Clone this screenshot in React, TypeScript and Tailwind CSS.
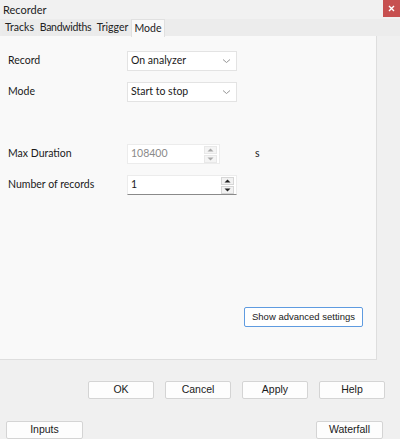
import React from "react";

const ui = { fontFamily: 'Lato, "Open Sans", sans-serif' };
const btn = { fontFamily: '"Liberation Sans", Arial, sans-serif' };

function Chevron() {
  return (
    <svg width="9" height="6" viewBox="0 0 9 6" className="shrink-0">
      <path d="M1 1.5 L4.5 4.5 L8 1.5" fill="none" stroke="#8a8a8a" strokeWidth="0.9" />
    </svg>
  );
}

function Select({ value }: { value: string }) {
  return (
    <div className="w-[110px] h-[20px] bg-white border border-[#e3e3e3] flex items-center justify-between pl-[3px] pr-[5px] text-[10.5px] text-[#1a1a1a]" style={ui}>
      <span>{value}</span>
      <Chevron />
    </div>
  );
}

function Arrow({ up, color }: { up: boolean; color: string }) {
  return (
    <svg width="7" height="4" viewBox="0 0 7 4">
      {up ? <path d="M0.5 3.5 L3.5 0.5 L6.5 3.5 Z" fill={color} /> : <path d="M0.5 0.5 L3.5 3.5 L6.5 0.5 Z" fill={color} />}
    </svg>
  );
}

function Spin({ value, disabled, width }: { value: string; disabled?: boolean; width: string }) {
  const c = disabled ? "#a8a8a8" : "#222";
  return (
    <div
      className={`${width} h-[20px] bg-white flex items-center justify-between pl-[3px] pr-[2px] text-[10.5px] border ${
        disabled ? "border-[#ececec] text-[#8a8a8a]" : "border-[#ececec] border-b-[#8a8a8a] text-[#1a1a1a]"
      }`}
      style={ui}
    >
      <span>{value}</span>
      <div className="flex flex-col gap-[1px]">
        <div className={`w-[13px] h-[8px] flex items-center justify-center border ${disabled ? "border-[#e8e8e8] bg-[#f4f4f4]" : "border-[#d6d6d6] bg-[#f2f2f2]"}`}>
          <Arrow up color={c} />
        </div>
        <div className={`w-[13px] h-[8px] flex items-center justify-center border ${disabled ? "border-[#e8e8e8] bg-[#f4f4f4]" : "border-[#d6d6d6] bg-[#f2f2f2]"}`}>
          <Arrow up={false} color={c} />
        </div>
      </div>
    </div>
  );
}

function Button({ label, w }: { label: string; w: string }) {
  return (
    <div className={`${w} h-[18px] bg-[#fdfdfd] border border-[#d4d4d4] rounded-[2px] flex items-center justify-center text-[10.5px] text-[#1a1a1a]`} style={btn}>
      {label}
    </div>
  );
}

export default function App() {
  return (
    <div className="w-[400px] h-[439px] bg-[#f0f0f0] flex flex-col overflow-hidden">
      {/* title bar */}
      <div className="h-[19px] flex justify-between items-start bg-[#f1f1f1]">
        <span className="pl-[3px] pt-[2px] text-[11px] text-[#222]" style={ui}>Recorder</span>
        <div className="w-[17px] h-[17px] bg-[#c75050] flex items-center justify-center">
          <svg width="7" height="7" viewBox="0 0 7 7">
            <path d="M1 1 L6 6 M6 1 L1 6" stroke="#fff" strokeWidth="1.4" />
          </svg>
        </div>
      </div>
      {/* tabs */}
      <div className="h-[17px] flex items-end pl-[2px] bg-[#ececec] text-[10.5px] text-[#222] whitespace-nowrap" style={ui}>
        <div className="h-[16px] w-[35px] shrink-0 flex items-center justify-center bg-[#ebebeb]">Tracks</div>
        <div className="h-[16px] w-[55px] shrink-0 ml-[1px] flex items-center justify-center bg-[#ebebeb] tracking-[-0.3px]">Bandwidths</div>
        <div className="h-[16px] w-[37px] shrink-0 ml-[1px] flex items-center justify-center bg-[#ebebeb]">Trigger</div>
        <div className="h-[18px] w-[34px] shrink-0 flex items-center justify-center bg-[#f9f9f9] border-t border-x border-[#e0e0e0] relative top-[1px]">Mode</div>
      </div>
      {/* panel */}
      <div className="w-[377px] h-[324px] bg-[#f9f9f9] border-r border-b border-[#dedede] flex flex-col pt-[15px] text-[10.5px] text-[#1a1a1a]" style={ui}>
        <div className="flex items-center">
          <div className="w-[127px] pl-[8px]">Record</div>
          <Select value="On analyzer" />
        </div>
        <div className="flex items-center mt-[11px]">
          <div className="w-[127px] pl-[8px]">Mode</div>
          <Select value="Start to stop" />
        </div>
        <div className="flex items-center mt-[42px]">
          <div className="w-[127px] pl-[8px]">Max Duration</div>
          <Spin value="108400" disabled width="w-[93px]" />
          <span className="ml-[35px]">s</span>
        </div>
        <div className="flex items-center mt-[11px]">
          <div className="w-[127px] pl-[8px]">Number of records</div>
          <Spin value="1" width="w-[110px]" />
        </div>
        <div className="flex-1" />
        <div className="flex justify-end pr-[13px] mb-[32px]">
          <div className="w-[119px] h-[20px] bg-white border border-[#5f9be0] rounded-[2px] flex items-center justify-center text-[9.5px] text-[#1a1a1a]" style={btn}>
            Show advanced settings
          </div>
        </div>
      </div>
      {/* bottom */}
      <div className="flex pl-[88px] gap-[11px] mt-[21px]">
        <Button label="OK" w="w-[66px]" />
        <Button label="Cancel" w="w-[66px]" />
        <Button label="Apply" w="w-[66px]" />
        <Button label="Help" w="w-[66px]" />
      </div>
      <div className="flex justify-between pl-[6px] pr-[17px] mt-[22px]">
        <Button label="Inputs" w="w-[77px]" />
        <Button label="Waterfall" w="w-[67px]" />
      </div>
    </div>
  );
}
